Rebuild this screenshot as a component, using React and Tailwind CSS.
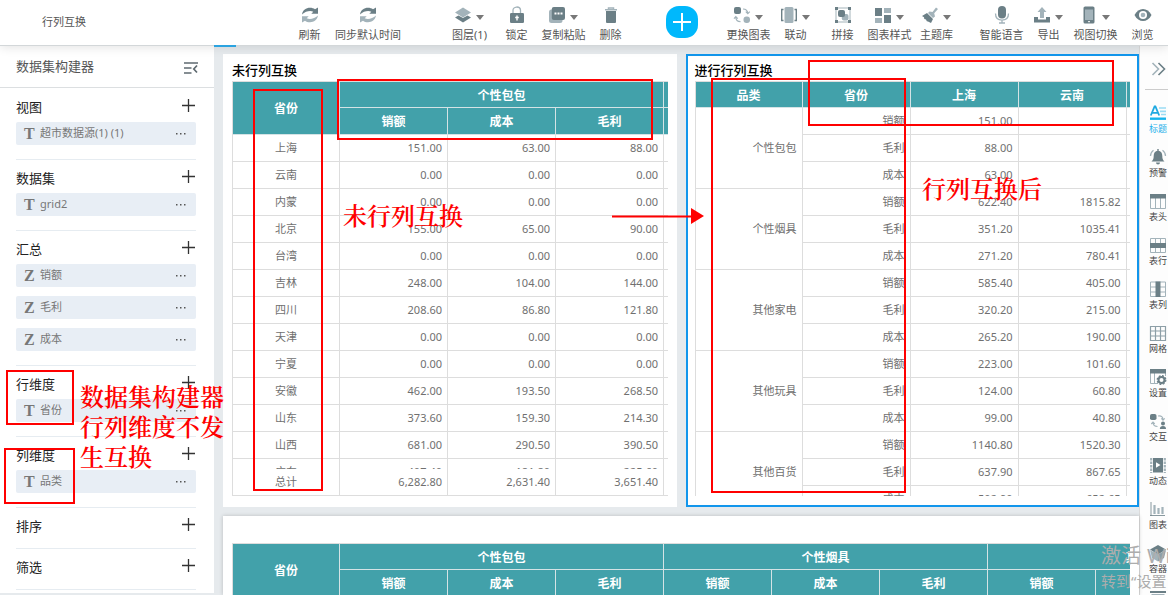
const DARK = '#6b7f86';
const LIGHT = '#a3b3ba';

const icons = {
  refresh: (
    <>
      <path d="M0 7.500C.8 3 4 .8 8 .8c2 0 3.600.5 5 1.500L16 .5v6.200H9.300l2-2C8 3.300 3.500 4.300 0 7.500z" fill={DARK} />
      <path d="M16 8.500c-.8 4.500-4 6.700-8 6.700-2 0-3.600-.5-5-1.500L0 15.500V9.300h6.700l-2 2c3.300 1.400 7.800.4 11.300-2.800z" fill={LIGHT} />
    </>
  ),
  layers: (
    <>
      <path d="M0 10.500l3.400-2L8 11l4.600-2.500 3.400 2-8 5z" fill={DARK} />
      <path d="M8 .5l8 5-8 5-8-5z" fill={LIGHT} />
    </>
  ),
  lock: (
    <>
      <path d="M4 7V3.500a3.500 3 0 0 1 7.500-.5V7" fill="none" stroke={LIGHT} strokeWidth="1.300" />
      <rect x="1" y="6" width="14" height="10" rx="1.300" fill={DARK} />
      <path d="M8 8.500v5M6.200 10.500h3.600" stroke="#fff" strokeWidth="1.400" />
    </>
  ),
  copy: (
    <>
      <rect x="0" y="2.500" width="13.500" height="13.500" rx="2.500" fill={LIGHT} />
      <rect x="2.800" y="0" width="13.200" height="13" rx="2" fill={DARK} />
      <path d="M5.500 6.500h2m1 0h2m1 0h2" stroke="#fff" strokeWidth="1.800" />
    </>
  ),
  trash: (
    <>
      <path d="M2 2.800h12M5.500 2.500V1h5v1.500" fill="none" stroke={LIGHT} strokeWidth="1.500" />
      <path d="M3 4h10v11a1 1 0 0 1-1 1H4a1 1 0 0 1-1-1z" fill={DARK} />
    </>
  ),
  swap: (
    <>
      <rect x="0" y="0" width="7" height="7" rx="2" fill={DARK} />
      <rect x="9.500" y="9.500" width="6.500" height="6.500" rx="3" fill={LIGHT} />
      <path d="M9 2c3 0 4.500 1.500 4.800 4.300M11.800 4.600l2 2 2-2M1.800 10c0 3 1.600 4.700 4.700 4.700M0 11.700l1.800-2 2 2" fill="none" stroke={LIGHT} strokeWidth="1.200" />
    </>
  ),
  link: (
    <>
      <rect x="3.500" y="0" width="9" height="16" rx="1.500" fill={LIGHT} />
      <path d="M2.500 2.500H.7v11h1.800M13.500 2.500h1.800v11h-1.800" fill="none" stroke={DARK} strokeWidth="1.400" />
    </>
  ),
  join: (
    <>
      <rect x="1" y="1" width="14" height="14" fill="none" stroke={LIGHT} />
      <path d="M0 0h3v3H0zM13 0h3v3h-3zM0 13h3v3H0zM13 13h3v3h-3z" fill={DARK} />
      <rect x="6.800" y="7" width="6.700" height="6.500" rx="2" fill={LIGHT} />
      <rect x="3" y="3" width="7" height="7" rx="2" fill={DARK} />
    </>
  ),
  style: (
    <>
      <path d="M0 1h7v8H0zM9 8h7v8H9z" fill={DARK} />
      <path d="M9 1h7v5H9zM0 11h7v5H0z" fill={LIGHT} />
    </>
  ),
  brush: (
    <>
      <path d="M7.500 4.500l3 .5L14 .5l2 1.500-3.800 4.200.8 3.200-2 1.500-5-5z" fill={LIGHT} />
      <path d="M5 6l6 6-2 4-3-1.500-1.200-.3-.8-1.700L2.300 12 2 10.300 0 9z" fill={DARK} />
    </>
  ),
  mic: (
    <>
      <path d="M1.500 6.500c0 4.500 2.500 6.600 6.500 6.600s6.500-2.100 6.500-6.600M8 13v2.600M5 16h6" fill="none" stroke={LIGHT} strokeWidth="1.300" />
      <rect x="4" y="-1" width="8" height="12.500" rx="4" fill={DARK} />
    </>
  ),
  export: (
    <>
      <path d="M8 0l4.500 5H10v6H6V5H3.500z" fill={LIGHT} />
      <path d="M0 10h4v2.500h8V10h4v5.500H0z" fill={DARK} />
    </>
  ),
  phone: (
    <>
      <rect x="2.500" y="-.5" width="11" height="17" rx="1.600" fill={DARK} />
      <path d="M4 2.500h8v10.500H4z" fill={LIGHT} />
      <path d="M7 14.700h2" stroke="#fff" />
    </>
  ),
  eye: (
    <>
      <path d="M-.5 8c4-8 13-8 17 0-4 8-13 8-17 0z" fill={DARK} />
      <circle cx="8" cy="8" r="4" fill="#fff" />
      <circle cx="8" cy="8" r="2.300" fill={LIGHT} />
    </>
  ),
  title: (
    <>
      <path d="M.8 10.500L4.600 1.500h.8l3.800 9M2.300 7.800h5.400" fill="none" stroke="#1fa9e1" strokeWidth="1.800" />
      <path d="M9 3h7M10 6.300h6M11 9.500h5" stroke="#9bdcf3" strokeWidth="1.700" />
      <path d="M0 13.700h16" stroke="#17b4ec" strokeWidth="2.400" />
    </>
  ),
  bell: (
    <>
      <path d="M8 1.500c3 .5 4.300 2.500 4.300 5.500 0 3 .7 4 2.200 5.500h-13C3 11 3.700 10 3.700 7 3.700 4 5 2 8 1.500zM6 13.500h4a2 2 0 0 1-4 0zM7.300 0h1.400v3H7.300z" fill={DARK} />
      <path d="M3.500 1.200C1.600 2.500.6 4.300.5 7M12.500 1.200c1.900 1.300 2.900 3.100 3 5.800" fill="none" stroke={LIGHT} strokeWidth="1.300" />
    </>
  ),
  tableHead: (
    <>
      <path d="M.5 4v11.500h15V4M5.500 4v11.500M10.500 4v11.500" fill="none" stroke={LIGHT} />
      <path d="M0 1h16v4.500H0z" fill={DARK} />
    </>
  ),
  tableRow: (
    <>
      <path d="M.5 1.500h15v14H.5zM5.500 1.500v14M10.500 1.500v14" fill="none" stroke={LIGHT} />
      <path d="M0 6h16v5H0z" fill={DARK} />
    </>
  ),
  tableCol: (
    <>
      <path d="M.5 1h15v14.500H.5zM.5 6h15M.5 11h15" fill="none" stroke={LIGHT} />
      <path d="M5.500.5h5V16h-5z" fill={DARK} />
    </>
  ),
  grid: <path d="M.5 1.500h15v14H.5zM5.500 1.500v14M10.500 1.500v14M.5 6h15M.5 11h15" fill="none" stroke="#8d9fa7" strokeWidth="1.200" />,
  settings: (
    <>
      <path d="M.5 4v10.500H8M4.500 4v10M15.500 4v3" fill="none" stroke={LIGHT} />
      <path d="M0 0h16v4.500H0z" fill={DARK} />
      <circle cx="11.500" cy="11" r="3" fill="none" stroke={DARK} strokeWidth="2" />
      <circle cx="11.500" cy="11" r="4.300" fill="none" stroke={DARK} strokeWidth="1.300" strokeDasharray="1.900 1.480" />
    </>
  ),
  interact: (
    <>
      <rect x="0" y="1" width="6.500" height="6" rx="1.800" fill={DARK} />
      <path d="M8 3c3.500-.5 5 .8 5 4M11.300 5.300L13 7.100l1.700-1.800M3 9c0 3.300 1 4.500 4.500 4.500M1.300 11L3 9.200 4.700 11" fill="none" stroke={LIGHT} strokeWidth="1.200" />
      <circle cx="13" cy="10.500" r="2" fill={DARK} />
      <path d="M9.800 16c0-2 1.200-3 3.200-3s3 1 3 3z" fill={DARK} />
    </>
  ),
  film: (
    <>
      <path d="M3 1h10v14.500H3z" fill={DARK} />
      <path d="M1.200 1v15M14.800 1v15" stroke={LIGHT} strokeWidth="2.200" strokeDasharray="2.500 1" />
      <path d="M6 5.200L10.500 8 6 10.800z" fill="#fff" />
    </>
  ),
  chart: (
    <>
      <path d="M1 1v14M0 14.500h15" stroke={DARK} strokeWidth=".8" />
      <path d="M4.500 4v9M8.500 7v6M12.500 6v7" stroke={LIGHT} strokeWidth="2.200" />
    </>
  ),
  box: (
    <>
      <path d="M0 5l8 4.500v7L2 13z" fill={LIGHT} />
      <path d="M16 5L8 9.500v7l6-3.500z" fill="#8d9fa7" />
      <path d="M8 0l8 4.500-8 5-8-5z" fill={DARK} />
    </>
  ),
  store: (
    <>
      <path d="M0 3h16" stroke={DARK} strokeWidth="2" />
      <rect x="2" y="5.500" width="12" height="10" fill="none" stroke={LIGHT} />
    </>
  ),
};

const Icon = ({ name }) => (
  <svg viewBox="0 0 16 16" className="size-4 shrink-0 overflow-visible" aria-hidden="true">
    {icons[name]}
  </svg>
);

const ToolButton = ({ icon, label, menu, wide }) => (
  <button type="button" className={`flex flex-col items-center gap-[5px] pt-1 ${wide ? 'w-[70px]' : 'w-[47px]'}`}>
    <span className="flex items-center gap-[5px]">
      <Icon name={icon} />
      {menu && (
        <svg viewBox="0 0 8 5" className="mt-1 h-[5px] w-2" aria-hidden="true">
          <path d="M0 0h8L4 5z" fill="#787878" />
        </svg>
      )}
    </span>
    <span className="text-[11px] leading-[14px] whitespace-nowrap text-[#555]">{label}</span>
  </button>
);

const layoutTools = [
  { icon: 'layers', label: '图层(1)', menu: true },
  { icon: 'lock', label: '锁定' },
  { icon: 'copy', label: '复制粘贴', menu: true },
  { icon: 'trash', label: '删除' },
];

const chartTools = [
  { icon: 'swap', label: '更换图表', menu: true },
  { icon: 'link', label: '联动', menu: true },
  { icon: 'join', label: '拼接' },
  { icon: 'style', label: '图表样式', menu: true },
  { icon: 'brush', label: '主题库', menu: true },
];

const viewTools = [
  { icon: 'mic', label: '智能语言' },
  { icon: 'export', label: '导出', menu: true },
  { icon: 'phone', label: '视图切换', menu: true },
  { icon: 'eye', label: '浏览' },
];

const ToolGroup = ({ tools }) => (
  <div className="flex">
    {tools.map((tool) => (
      <ToolButton key={tool.label} {...tool} />
    ))}
  </div>
);

const Header = () => (
  <header className="relative z-10 flex h-[46px] shrink-0 items-center border-b border-[#d3d7d9] bg-white pr-[2px] pl-[42px] shadow-[0_1px_10px_rgba(0,0,0,0.12)]">
    <h1 className="text-[11px] whitespace-nowrap text-[#555]">行列互换</h1>
    <div className="ml-auto flex items-center">
      <div className="mr-[43px] flex">
        <ToolButton icon="refresh" label="刷新" />
        <ToolButton icon="refresh" label="同步默认时间" wide />
      </div>
      <ToolGroup tools={layoutTools} />
      <button type="button" aria-label="添加" className="mr-[27px] mb-[2px] ml-8 flex size-8 items-center justify-center rounded-[13px] bg-[#00b8fc]">
        <svg viewBox="0 0 18 18" className="size-[18px]" aria-hidden="true">
          <path d="M9 0v18M0 9h18" stroke="#fff" strokeWidth="2" />
        </svg>
      </button>
      <ToolGroup tools={chartTools} />
      <div className="ml-[18px]">
        <ToolGroup tools={viewTools} />
      </div>
    </div>
  </header>
);

const sections = [
  { title: '视图', type: 'T', items: ['超市数据源(1) (1)'] },
  { title: '数据集', type: 'T', items: ['grid2'] },
  { title: '汇总', type: 'Z', items: ['销额', '毛利', '成本'] },
  { title: '行维度', type: 'T', items: ['省份'] },
  { title: '列维度', type: 'T', items: ['品类'] },
  { title: '排序', items: [] },
  { title: '筛选', items: [] },
];

const Sidebar = () => (
  <aside className="mb-[2px] w-[214px] shrink-0 bg-white">
    <div className="flex h-[42px] items-center justify-between border-b border-[#dcdfe1] pr-4 pl-4">
      <h2 className="text-[13px] text-[#555]">数据集构建器</h2>
      <button type="button" aria-label="收起">
        <svg viewBox="0 0 14 12" className="mt-[2px] h-3 w-[14px]" fill="none" stroke="#5f6a70" strokeWidth="1.700" aria-hidden="true">
          <path d="M0 1h14M0 6h7.500M0 11h7.500M13 3.500L9.800 7l3.200 3.500" />
        </svg>
      </button>
    </div>
    <div className="px-4 pt-px">
      {sections.map(({ title, type, items }) => (
        <section key={title} className={`mr-[2px] border-b border-[#e6ecf1] ${items.length ? 'pb-[5px]' : 'pb-[7px]'}`}>
          <div className="flex h-[33px] items-center justify-between pt-1">
            <h3 className="text-[13px] text-[#222]">{title}</h3>
            <button type="button" aria-label={`添加${title}`} className="mr-[1px] mb-1">
              <svg viewBox="0 0 13 13" className="size-[13px]" aria-hidden="true">
                <path d="M6.500 0v13M0 6.500h13" stroke="#333" strokeWidth="1.300" />
              </svg>
            </button>
          </div>
          <ul>
            {items.map((item) => (
              <li key={item} className="mb-[9px] flex h-[23px] items-center rounded-[2px] bg-[#e8eef5] pr-[9px] pl-2 text-[11px] text-[#777]">
                <span className="w-4 font-['Liberation_Serif',serif] text-base font-bold">{type}</span>
                <span>{item}</span>
                <button type="button" aria-label="更多" className="ml-auto">
                  <svg viewBox="0 0 12 2" className="h-[2px] w-3" fill="#555" aria-hidden="true">
                    <path d="M1 0h1.500v1.500H1zM5 0h1.500v1.500H5zM9 0h1.500v1.500H9z" />
                  </svg>
                </button>
              </li>
            ))}
          </ul>
        </section>
      ))}
    </div>
  </aside>
);

const measures = ['销额', '成本', '毛利'];

const provinceRows = [
  ['上海', '151.00', '63.00', '88.00'],
  ['云南', '0.00', '0.00', '0.00'],
  ['内蒙', '0.00', '0.00', '0.00'],
  ['北京', '155.00', '65.00', '90.00'],
  ['台湾', '0.00', '0.00', '0.00'],
  ['吉林', '248.00', '104.00', '144.00'],
  ['四川', '208.60', '86.80', '121.80'],
  ['天津', '0.00', '0.00', '0.00'],
  ['宁夏', '0.00', '0.00', '0.00'],
  ['安徽', '462.00', '193.50', '268.50'],
  ['山东', '373.60', '159.30', '214.30'],
  ['山西', '681.00', '290.50', '390.50'],
  ['广东', '407.40', '181.80', '225.60'],
];

const totalRow = ['总计', '6,282.80', '2,631.40', '3,651.40'];

const categoryRows = [
  {
    name: '个性包包',
    rows: [['销额', '151.00', ''], ['毛利', '88.00', ''], ['成本', '63.00', '']],
  },
  {
    name: '个性烟具',
    rows: [['销额', '622.40', '1815.82'], ['毛利', '351.20', '1035.41'], ['成本', '271.20', '780.41']],
  },
  {
    name: '其他家电',
    rows: [['销额', '585.40', '405.00'], ['毛利', '320.20', '215.00'], ['成本', '265.20', '190.00']],
  },
  {
    name: '其他玩具',
    rows: [['销额', '223.00', '101.60'], ['毛利', '124.00', '60.80'], ['成本', '99.00', '40.80']],
  },
  {
    name: '其他百货',
    rows: [['销额', '1140.80', '1520.30'], ['毛利', '637.90', '867.65'], ['成本', '502.90', '652.65']],
  },
];

const tableClass = 'table-fixed border-separate border-spacing-0 border-l border-[#ddd] text-[11px] text-[#707070]';
const headClass = 'border-r border-b border-[#d5e3e5] bg-[#42a1aa] px-0 pt-[2px] pb-0 text-xs font-bold text-white';
const cellClass = 'h-[27px] border-r border-b border-[#ddd] py-0 pr-[5px] pl-0 text-right';
const centerClass = 'h-[27px] border-r border-b border-[#ddd] p-0 text-center font-normal';

const Columns = ({ count }) => (
  <colgroup>
    <col className="w-[107px]" />
    {Array.from({ length: count }, (_, i) => (
      <col key={i} className="w-[108px]" />
    ))}
  </colgroup>
);

const GroupedHead = ({ groups }) => (
  <thead>
    <tr className="h-[26px]">
      <th rowSpan={2} className={headClass}>省份</th>
      {groups.map((group) => (
        <th key={group} colSpan={3} className={headClass}>{group}</th>
      ))}
    </tr>
    <tr className="h-[27px]">
      {groups.map((group) => measures.map((m) => (
        <th key={group + m} className={headClass}>{m}</th>
      )))}
    </tr>
  </thead>
);

const ProvinceCells = ({ row }) => (
  <tr>
    <th className={centerClass}>{row[0]}</th>
    {row.slice(1).map((value, i) => (
      <td key={i} className={cellClass}>{value}</td>
    ))}
    <td colSpan={3} className={cellClass} />
  </tr>
);

const ProvincePanel = () => (
  <section className="min-w-0 flex-1 bg-white px-[9px] pb-[11px]">
    <h2 className="flex h-[27px] items-center pt-[6px] text-[13px] font-medium text-black">未行列互换</h2>
    <div className="h-[388px] overflow-hidden border-t border-[#ddd]">
      <table className={`${tableClass} w-[756px]`}>
        <Columns count={6} />
        <GroupedHead groups={['个性包包', '个性烟具']} />
        <tbody>
          {provinceRows.map((row) => (
            <ProvinceCells key={row[0]} row={row} />
          ))}
        </tbody>
      </table>
    </div>
    <div className="overflow-hidden">
      <table className={`${tableClass} w-[756px]`}>
        <Columns count={6} />
        <tbody>
          <ProvinceCells row={totalRow} />
        </tbody>
      </table>
    </div>
  </section>
);

const CategoryPanel = () => (
  <section className="min-w-0 flex-1 bg-white px-[9px] pb-[11px] outline-2 -outline-offset-2 outline-[#1296ec]">
    <h2 className="flex h-[27px] items-center pt-[6px] text-[13px] font-medium text-black">进行行列互换</h2>
    <div className="h-[415px] overflow-hidden border-t border-[#ddd]">
      <table className={`${tableClass} w-[540px]`}>
        <Columns count={4} />
        <thead>
          <tr className="h-[26px]">
            {['品类', '省份', '上海', '云南', '内蒙'].map((name) => (
              <th key={name} className={headClass}>{name}</th>
            ))}
          </tr>
        </thead>
        <tbody>
          {categoryRows.map((category) => category.rows.map((row, i) => (
            <tr key={category.name + row[0]}>
              {i === 0 && <td rowSpan={3} className={cellClass}>{category.name}</td>}
              {row.map((value, j) => (
                <td key={j} className={cellClass}>{value}</td>
              ))}
              <td className={cellClass} />
            </tr>
          )))}
        </tbody>
      </table>
    </div>
  </section>
);

const WidePanel = () => (
  <section className="flex-1 overflow-hidden bg-white px-[9px] pt-[27px] shadow-[0_0_4px_rgba(0,0,0,0.2)]">
    <div className="overflow-hidden border-t border-[#ddd]">
      <table className={`${tableClass} w-[1080px]`}>
        <Columns count={9} />
        <GroupedHead groups={['个性包包', '个性烟具', '其他家电']} />
      </table>
    </div>
  </section>
);

const panelTabs = [
  { icon: 'title', label: '标题' },
  { icon: 'bell', label: '预警' },
  { icon: 'tableHead', label: '表头' },
  { icon: 'tableRow', label: '表行' },
  { icon: 'tableCol', label: '表列' },
  { icon: 'grid', label: '网格' },
  { icon: 'settings', label: '设置' },
  { icon: 'interact', label: '交互' },
  { icon: 'film', label: '动态' },
  { icon: 'chart', label: '图表' },
  { icon: 'box', label: '容器' },
  { icon: 'store', label: '组件' },
];

const RightBar = () => (
  <nav className="w-[29px] shrink-0 overflow-hidden border-l border-[#dcdcdc] bg-[#fdfdfd]">
    <button type="button" aria-label="展开" className="ml-[5px] flex h-11 w-6 items-center justify-end border-b border-[#ccc]">
      <svg viewBox="0 0 16 14" className="mt-[2px] mr-[2px] h-[14px] w-4 shrink-0" fill="none" strokeWidth="1.600" aria-hidden="true">
        <path d="M1.500 1L7.500 7l-6 6" stroke={LIGHT} />
        <path d="M7.500 1l6 6-6 6" stroke={DARK} />
      </svg>
    </button>
    <div className="flex flex-col pt-[15px] pl-2">
      {panelTabs.map((tab) => (
        <button key={tab.label} type="button" className="flex h-11 w-5 shrink-0 flex-col items-center gap-[2px]">
          <Icon name={tab.icon} />
          <span className={`text-[9px] leading-[12px] whitespace-nowrap ${tab.icon === 'title' ? 'text-[#1fb0ea]' : 'text-[#444]'}`}>{tab.label}</span>
        </button>
      ))}
    </div>
  </nav>
);

// Red marks drawn over the page
const Annotations = () => (
  <div className="pointer-events-none absolute inset-0 z-20 font-['Noto_Serif_CJK_SC','Noto_Sans_CJK_SC',serif] text-2xl leading-[30px] font-semibold text-[#f00]">
    <div className="absolute top-[370px] left-[6px] h-[55px] w-[68px] border-2 border-[#f00]" />
    <div className="absolute top-[448px] left-[4px] h-[56px] w-[71px] border-2 border-[#f00]" />
    <div className="absolute top-[89px] left-[253px] h-[402px] w-[70px] border-2 border-[#f00]" />
    <div className="absolute top-[79px] left-[337px] h-[61px] w-[316px] border-2 border-[#f00]" />
    <div className="absolute top-[78px] left-[711px] h-[415px] w-[195px] border-2 border-[#f00]" />
    <div className="absolute top-[60px] left-[808px] h-[66px] w-[306px] border-2 border-[#f00]" />
    <p className="absolute top-[381px] left-[80px] w-[146px]">数据集构建器行列维度不发生互换</p>
    <p className="absolute top-[200px] left-[343px] whitespace-nowrap">未行列互换</p>
    <p className="absolute top-[173px] left-[922px] whitespace-nowrap">行列互换后</p>
    <svg viewBox="0 0 92 16" className="absolute top-[208px] left-[612px] h-4 w-[92px]" aria-hidden="true">
      <path d="M0 8.500h81" stroke="#f00" strokeWidth="2" />
      <path d="M79 0l13 8-13 8z" fill="#f00" />
    </svg>
  </div>
);

const Watermark = () => (
  <div className="pointer-events-none absolute right-0 bottom-0 z-10 w-[67px] overflow-hidden whitespace-nowrap text-[#adadad]">
    <p className="flex gap-[6px] text-xl leading-[22px]">
      <span>激活</span>
      <span>Windows</span>
    </p>
    <p className="text-[15px] leading-[28px]">转到“设置</p>
  </div>
);

const App = () => (
  <div className="relative flex h-screen flex-col overflow-hidden bg-[#e6eaed] font-['Noto_Sans','Noto_Sans_CJK_SC',sans-serif]">
    <Header />
    <div className="flex min-h-0 flex-1">
      <Sidebar />
      <main className="relative flex min-w-0 flex-1 flex-col gap-[9px] pt-2 pl-[9px]">
        <div className="absolute -top-px left-0 z-10 h-[2px] w-[22px] bg-[#2ba3e0]" />
        <div className="flex gap-[9px]">
          <ProvincePanel />
          <CategoryPanel />
        </div>
        <WidePanel />
      </main>
      <RightBar />
    </div>
    <Annotations />
    <Watermark />
  </div>
);

export default App;
